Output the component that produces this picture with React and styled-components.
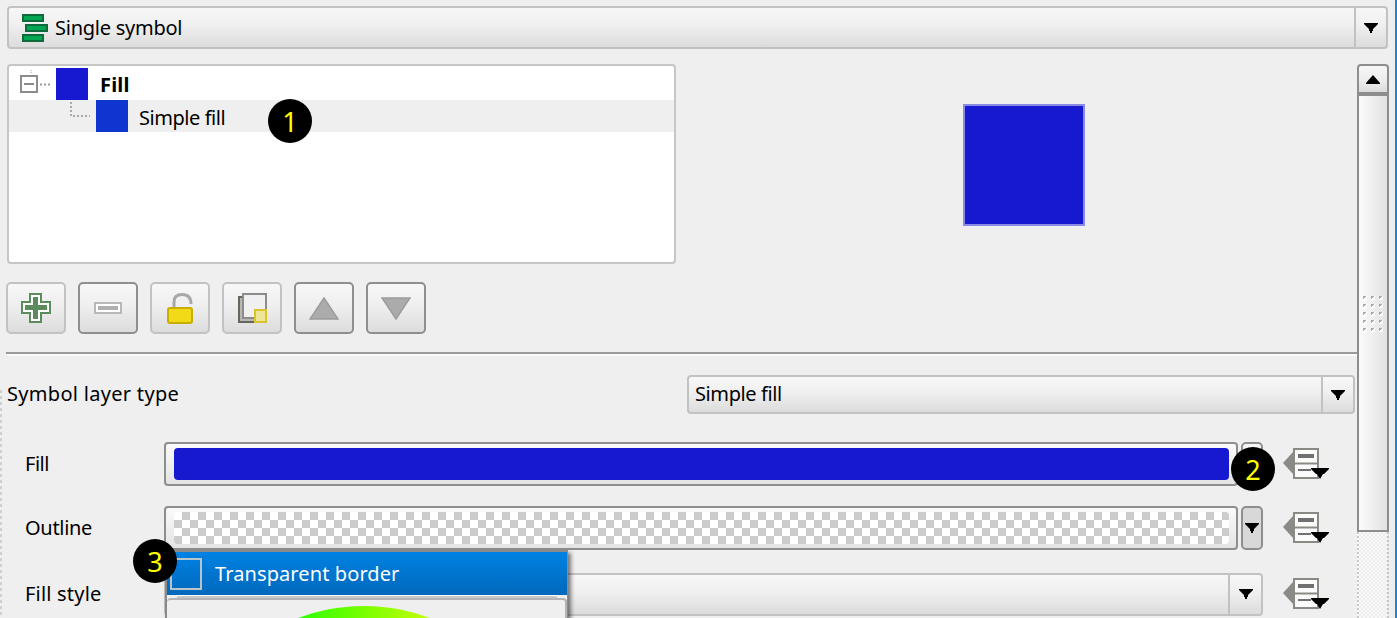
import React from "react";
import styled, { createGlobalStyle } from "styled-components";

const GlobalStyle = createGlobalStyle`
  html, body {
    margin: 0;
    padding: 0;
    background: #efefef;
  }
  * {
    box-sizing: border-box;
  }
`;

const raised = "linear-gradient(180deg, #f7f7f7 0%, #efefef 45%, #dcdcdc 100%)";

const Arrow = ({ w = 14 }) => (
  <svg width={w} height="10" viewBox="0 0 14 10" aria-hidden="true">
    <path d="M0 0H14V1L9 6V8H8V10H6V8H5V6L0 1Z" fill="#000" />
  </svg>
);

const SymbolIcon = () => (
  <svg width="27" height="30" viewBox="0 0 27 30" aria-hidden="true">
    <g fill="#00a651" stroke="#0d6b3c" strokeWidth="2">
      <rect x="1" y="1" width="20" height="6" />
      <rect x="4" y="11" width="21" height="6" />
      <rect x="1" y="21" width="20" height="6" />
    </g>
  </svg>
);

const DataIcon = () => (
  <svg width="48" height="32" viewBox="0 0 48 32" aria-hidden="true">
    <path d="M0 15L10 4V26Z" fill="#8a8a86" />
    <rect x="11" y="1" width="24" height="29" fill="#fbfbfb" stroke="#8a8a84" strokeWidth="2" />
    <path d="M11 15.5H35" stroke="#8a8a84" strokeWidth="2" />
    <rect x="15" y="6" width="16" height="4" fill="#707070" />
    <path d="M15 22H28" stroke="#707070" strokeWidth="2" />
    <path d="M28 20H46V21L41 26H40L37 31L34 26H33L28 21Z" fill="#000" />
  </svg>
);

const TreeExpander = () => (
  <svg width="47" height="32" viewBox="0 0 47 32" aria-hidden="true">
    <path d="M22 2V5" stroke="#aaa" strokeDasharray="1 1" strokeWidth="1" />
    <rect x="12" y="8" width="16" height="16" fill="#fff" stroke="#8c8c8c" strokeWidth="2" />
    <path d="M15 16H25" stroke="#8c8c8c" strokeWidth="2" />
    <path d="M31 16.5H42" stroke="#999" strokeWidth="2" strokeDasharray="2 2" />
  </svg>
);

const TreeBranch = () => (
  <svg width="87" height="32" viewBox="0 0 87 32" aria-hidden="true">
    <path d="M62 2V16H81" fill="none" stroke="#aaa" strokeWidth="2" strokeDasharray="2 2" />
  </svg>
);

const PlusIcon = () => (
  <svg width="30" height="30" viewBox="0 0 30 30" aria-hidden="true">
    <path d="M9 1H20V9H29V20H20V29H9V20H1V9H9Z" fill="#fff" stroke="#5b8c5d" strokeWidth="2" />
    <path d="M12 4H17V12H26V17H17V26H12V17H4V12H12Z" fill="#5b8c5d" />
  </svg>
);

const MinusIcon = () => (
  <svg width="28" height="12" viewBox="0 0 28 12" aria-hidden="true">
    <rect x="1" y="1" width="26" height="10" fill="#fff" stroke="#b8b8b8" strokeWidth="2" />
    <rect x="4" y="4" width="20" height="4" fill="#b0b0b0" />
  </svg>
);

const LockIcon = () => (
  <svg width="26" height="31" viewBox="0 0 26 31" aria-hidden="true">
    <path d="M7 15V9C7 4 10 1.500 15 1.500C21 1.500 24 5 24 11" fill="none" stroke="#a8a8a8" strokeWidth="3" />
    <rect x="1" y="15" width="24" height="15" rx="2" fill="#f2da18" stroke="#c9ae00" strokeWidth="2" />
  </svg>
);

const DuplicateIcon = () => (
  <svg width="29" height="30" viewBox="0 0 29 30" aria-hidden="true">
    <rect x="1" y="4" width="23" height="25" fill="#b8b8b0" stroke="#66665e" strokeWidth="2" />
    <rect x="5" y="1" width="23" height="24" fill="#f0f0f0" stroke="#8c8c8c" strokeWidth="2" />
    <rect x="17" y="17" width="11" height="12" fill="#eee596" stroke="#d8c42c" strokeWidth="2" />
  </svg>
);

const TriangleIcon = ({ down }) => (
  <svg width="30" height="23" viewBox="0 0 30 23" aria-hidden="true">
    <path
      d={down ? "M1 1H29L15 22Z" : "M15 1L29 22H1Z"}
      fill="#ababab"
      stroke="#9c9c9c"
      strokeWidth="1.500"
    />
  </svg>
);

const WheelArc = () => (
  <svg width="132" height="12" viewBox="0 0 132 12" aria-hidden="true">
    <defs>
      <linearGradient id="wheel" gradientUnits="userSpaceOnUse" x1="0" x2="132" y1="0" y2="0">
        <stop offset="0" stopColor="#2cff00" />
        <stop offset="1" stopColor="#c6ff00" />
      </linearGradient>
    </defs>
    <circle cx="66" cy="187" r="187" fill="url(#wheel)" />
  </svg>
);

const tools = [
  { key: "add", icon: <PlusIcon /> },
  { key: "remove", icon: <MinusIcon />, strong: true },
  { key: "lock", icon: <LockIcon /> },
  { key: "duplicate", icon: <DuplicateIcon /> },
  { key: "up", icon: <TriangleIcon />, strong: true },
  { key: "down", icon: <TriangleIcon down />, strong: true },
];

const grips = Array.from({ length: 15 });

const App = () => {
  return (
    <Page>
      <GlobalStyle />
      <TopCombo>
        <ComboText>
          <SymbolIcon />
          <TopLabel $track={-0.25}>Single symbol</TopLabel>
        </ComboText>
        <ComboArrow $width={32}>
          <Arrow />
        </ComboArrow>
      </TopCombo>

      <Body>
        <Content>
          <TopSplit>
            <TreeBox>
              <TreeRow>
                <TreeExpander />
                <Swatch $color="#1719d0" />
                <FillName>Fill</FillName>
              </TreeRow>
              <TreeRow $selected>
                <TreeBranch />
                <Swatch $color="#0f35d0" />
                <LayerName>Simple fill</LayerName>
              </TreeRow>
            </TreeBox>
            <PreviewPane>
              <PreviewSquare />
            </PreviewPane>
          </TopSplit>

          <Toolbar>
            {tools.map((tool) => (
              <ToolButton key={tool.key} $strong={tool.strong}>
                {tool.icon}
              </ToolButton>
            ))}
          </Toolbar>

          <Divider />

          <Form>
            <TypeRow>
              <Label $track={0.3}>Symbol layer type</Label>
              <TypeCombo>
                <ComboText>
                  <Label $track={-0.4}>Simple fill</Label>
                </ComboText>
                <ComboArrow $width={32}>
                  <Arrow />
                </ComboArrow>
              </TypeCombo>
            </TypeRow>

            <Rows>
              <FieldRow>
                <Label $track={-0.5}>Fill</Label>
                <ColorControl>
                  <ColorButton>
                    <ColorInner $color="#1719d0" />
                  </ColorButton>
                  <ColorDrop />
                </ColorControl>
                <DataIcon />
              </FieldRow>
              <FieldRow>
                <Label $track={-0.3}>Outline</Label>
                <ColorControl>
                  <ColorButton>
                    <ColorInner $checker />
                  </ColorButton>
                  <ColorDrop $active>
                    <Arrow w={18} />
                  </ColorDrop>
                </ColorControl>
                <DataIcon />
              </FieldRow>
              <FieldRow $top={2}>
                <Label $track={0.2}>Fill style</Label>
                <StyleCombo>
                  <ComboText />
                  <ComboArrow $width={33}>
                    <Arrow />
                  </ComboArrow>
                </StyleCombo>
                <DataIcon />
              </FieldRow>
            </Rows>
          </Form>
        </Content>

        <ScrollBar>
          <ScrollUp>
            <svg width="14" height="9" viewBox="0 0 14 9" aria-hidden="true">
              <path d="M7 0L14 8V9H0V8Z" fill="#000" />
            </svg>
          </ScrollUp>
          <ScrollThumb>
            <GripGrid>
              {grips.map((_, i) => (
                <Grip key={i} />
              ))}
            </GripGrid>
          </ScrollThumb>
          <ScrollTrough />
        </ScrollBar>
      </Body>

      <Popup>
        <PopupItem>
          <PopupSwatch />
          <PopupText>Transparent border</PopupText>
        </PopupItem>
        <PopupRule />
        <PopupPanel>
          <WheelArc />
        </PopupPanel>
      </Popup>

      <Badge $x={268} $y={99}>1</Badge>
      <Badge $x={1231} $y={447}>2</Badge>
      <Badge $x={133} $y={539}>3</Badge>
    </Page>
  );
};

const Page = styled.div`
  position: relative;
  width: 1397px;
  height: 618px;
  padding-top: 6px;
  overflow: hidden;
  background: #efefef;
  border-right: 2px solid #1a86da;
  color: #000;
  font-family: "Noto Sans", sans-serif;
  font-size: 20px;
`;

const Label = styled.span`
  padding-bottom: 2px;
  white-space: nowrap;
  letter-spacing: ${(props) => props.$track || 0}px;
`;

const TopLabel = styled(Label)`
  padding-bottom: 0;
`;

const ComboBase = styled.div`
  display: flex;
  align-items: stretch;
  border: 2px solid #c2c2c2;
  border-radius: 4px;
  background: ${raised};
`;

const TopCombo = styled(ComboBase)`
  width: 1381px;
  height: 43px;
  margin-left: 7px;
`;

const ComboText = styled.div`
  flex: 1;
  display: flex;
  align-items: center;
  gap: 6px;
  padding-left: 6px;
  svg {
    margin-left: 7px;
    margin-top: 2px;
  }
`;

const ComboArrow = styled.div`
  flex: none;
  width: ${(props) => props.$width}px;
  display: flex;
  align-items: center;
  justify-content: center;
  border-left: 2px solid #c2c2c2;
`;

const Body = styled.div`
  display: flex;
  height: 554px;
  margin-top: 15px;
`;

const Content = styled.div`
  flex: none;
  width: 1357px;
`;

const TopSplit = styled.div`
  display: flex;
  height: 200px;
  margin-left: 7px;
`;

const TreeBox = styled.div`
  flex: none;
  width: 669px;
  padding: 2px 0;
  border: 2px solid #c6c6c6;
  border-radius: 4px;
  background: #fff;
`;

const TreeRow = styled.div`
  display: flex;
  align-items: center;
  height: 32px;
  background: ${(props) => (props.$selected ? "#efefef" : "transparent")};
`;

const Swatch = styled.div`
  flex: none;
  width: 32px;
  height: 32px;
  background: ${(props) => props.$color};
`;

const FillName = styled.span`
  margin-left: 12px;
  font-weight: 700;
  letter-spacing: 0.2px;
`;

const LayerName = styled.span`
  margin-left: 11px;
  padding-top: 2px;
  letter-spacing: -0.45px;
`;

const PreviewPane = styled.div`
  flex: 1;
  display: flex;
  align-items: center;
  justify-content: center;
  padding: 2px 0 0 14px;
`;

const PreviewSquare = styled.div`
  width: 122px;
  height: 122px;
  background: #1719d0;
  border: 2px solid #8a8be4;
`;

const Toolbar = styled.div`
  display: flex;
  gap: 12px;
  margin: 18px 0 0 6px;
`;

const ToolButton = styled.div`
  width: 60px;
  height: 52px;
  display: flex;
  align-items: center;
  justify-content: center;
  border: 2px solid ${(props) => (props.$strong ? "#8e8e8e" : "#c2c2c2")};
  border-radius: 5px;
  background: ${raised};
`;

const Divider = styled.div`
  height: 4px;
  margin: 18px 0 0 6px;
  border-top: 2px solid #9a9a9a;
  border-bottom: 2px solid #fafafa;
`;

const Form = styled.div`
  margin-top: 19px;
  background: repeating-linear-gradient(180deg, #d0d0d0 0 3px, transparent 3px 6px) 0 15px / 2px 100% no-repeat;
`;

const TypeRow = styled.div`
  display: flex;
  align-items: center;
  justify-content: space-between;
  height: 39px;
  padding: 0 2px 0 7px;
`;

const TypeCombo = styled(ComboBase)`
  width: 668px;
  height: 39px;
`;

const Rows = styled.div`
  display: flex;
  flex-direction: column;
  gap: 20px;
  margin-top: 28px;
`;

const FieldRow = styled.div`
  display: grid;
  grid-template-columns: 139px 1099px 48px;
  column-gap: 0;
  align-items: center;
  height: 44px;
  margin-top: ${(props) => props.$top || 0}px;
  padding-left: 25px;
  svg[width="48"] {
    margin-left: 20px;
  }
`;

const ColorControl = styled.div`
  display: flex;
  gap: 3px;
  height: 44px;
`;

const ColorButton = styled.div`
  flex: 1;
  padding: 4px 7px 4px 8px;
  border: 2px solid #8e8e8e;
  border-radius: 4px;
  background: linear-gradient(180deg, #fafafa, #e4e4e4);
`;

const ColorInner = styled.div`
  height: 100%;
  border-radius: 4px;
  background: ${(props) =>
    props.$checker
      ? "repeating-conic-gradient(#cccccc 0 25%, #ffffff 0 50%) 0 0 / 16px 16px"
      : props.$color};
`;

const ColorDrop = styled.div`
  flex: none;
  width: 22px;
  display: flex;
  align-items: center;
  justify-content: center;
  border: 2px solid #8e8e8e;
  border-radius: 5px;
  background: ${(props) => (props.$active ? "#d8d8d8" : raised)};
`;

const StyleCombo = styled(ComboBase)`
  height: 43px;
`;

const ScrollBar = styled.div`
  flex: none;
  width: 32px;
  display: flex;
  flex-direction: column;
`;

const ScrollUp = styled.div`
  flex: none;
  height: 32px;
  display: flex;
  align-items: center;
  justify-content: center;
  border: 2px solid #8e8e8e;
  border-bottom-width: 4px;
  border-radius: 4px 4px 0 0;
  background: ${raised};
`;

const ScrollThumb = styled.div`
  flex: none;
  height: 436px;
  padding-top: 200px;
  border: 2px solid #8e8e8e;
  border-top: 0;
  background: linear-gradient(90deg, #fbfbfb, #e2e2e2);
`;

const GripGrid = styled.div`
  display: grid;
  grid-template-columns: repeat(3, 4px);
  gap: 4px;
  justify-content: center;
`;

const Grip = styled.div`
  width: 4px;
  height: 4px;
  background: linear-gradient(135deg, #a8a8a8 50%, #fff 50%);
`;

const ScrollTrough = styled.div`
  flex: 1;
  background:
    repeating-linear-gradient(180deg, #c8c8c8 0 2px, transparent 2px 4px) 0 0 / 2px 100% no-repeat,
    repeating-linear-gradient(180deg, #c8c8c8 0 2px, transparent 2px 4px) 100% 0 / 2px 100% no-repeat,
    repeating-conic-gradient(#f9f9f9 0 25%, #ededed 0 50%) 0 0 / 4px 4px;
`;

const Popup = styled.div`
  position: absolute;
  left: 165px;
  top: 550px;
  width: 403px;
  height: 80px;
  border: 2px solid #8a8a8a;
  border-bottom: 0;
  border-right-width: 1px;
  background: #efefef;
  box-shadow: 3px 3px 4px rgba(0, 0, 0, 0.5);
`;

const PopupItem = styled.div`
  display: flex;
  align-items: center;
  gap: 13px;
  height: 43px;
  padding-left: 3px;
  color: #fff;
  background: linear-gradient(180deg, #0082e4, #0068bb);
`;

const PopupText = styled.span`
  letter-spacing: 0.1px;
`;

const PopupSwatch = styled.div`
  width: 32px;
  height: 32px;
  border: 2px solid #b8c4cc;
`;

const PopupRule = styled.div`
  height: 3px;
  margin: 0 10px;
  border-bottom: 2px solid #c8c8c8;
  background: #fff;
`;

const PopupPanel = styled.div`
  display: flex;
  justify-content: center;
  height: 40px;
  padding: 6px 4px 0 0;
  border-top: 2px solid #b4b4b4;
  border-right: 2px solid #b4b4b4;
  border-radius: 4px 4px 0 0;
`;

const Badge = styled.div`
  position: absolute;
  left: ${(props) => props.$x}px;
  top: ${(props) => props.$y}px;
  width: 44px;
  height: 44px;
  display: flex;
  align-items: center;
  justify-content: center;
  border-radius: 50%;
  background: #000;
  color: #ffff00;
  font-family: "Noto Sans", sans-serif;
  font-size: 27px;
`;

export default App;
